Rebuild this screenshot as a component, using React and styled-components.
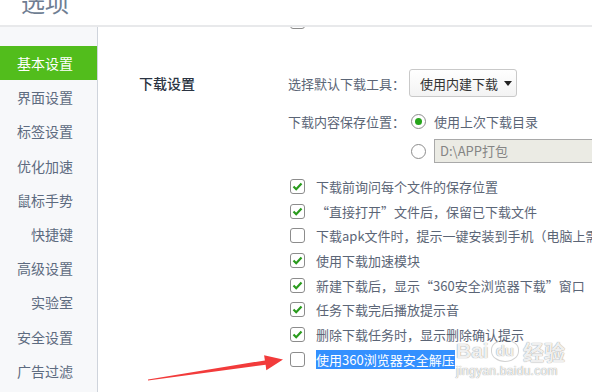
import React from "react";
import styled, { createGlobalStyle } from "styled-components";

const Global = createGlobalStyle`
  html, body { margin: 0; padding: 0; background: #fff; }
  body {
    width: 592px; height: 392px; overflow: hidden;
    font-family: "Noto Sans CJK SC", "Noto Sans", sans-serif;
  }
`;

const Page = styled.div`
  position: relative;
  width: 592px;
  height: 392px;
  display: flex;
  flex-direction: column;
  overflow: hidden;
`;

const Header = styled.header`
  height: 25px;
  flex: none;
  border-bottom: 2px solid #e8e9eb;
  overflow: hidden;
  padding-left: 21px;
`;

const Title = styled.h1`
  margin: -10px 0 0;
  font-size: 24px;
  line-height: 24px;
  font-weight: 400;
  color: #6f7e93;
`;

const Body = styled.div`
  flex: 1;
  display: flex;
  min-height: 0;
`;

const Sidebar = styled.nav`
  width: 98px;
  flex: none;
  background: #f7f8fa;
  border-right: 1px solid #cfd4dc;
  padding-top: 19px;
  box-sizing: border-box;
`;

const NavItem = styled.div`
  height: 34.2px;
  line-height: 34.2px;
  text-align: right;
  padding-right: 24px;
  font-size: 14px;
  color: ${p => (p.$active ? "#fff" : "#5d6b80")};
  background: ${p => (p.$active ? "#52bd1c" : "transparent")};
`;

const Main = styled.main`
  flex: 1;
  overflow: hidden;
  position: relative;
`;

const Scroll = styled.div`
  margin-top: -13px;
  padding-left: 41px;
`;

const PrevRow = styled.div`
  display: flex;
  padding-left: 149px;
  height: 15px;
`;

const Section = styled.section`
  display: grid;
  grid-template-columns: 149px 1fr;
  margin-top: 40px;
`;

const SectionTitle = styled.h2`
  margin: 0;
  font-size: 14px;
  line-height: 28px;
  font-weight: 500;
  color: #2b3442;
`;

const Content = styled.div`
  display: flex;
  flex-direction: column;
`;

const Line = styled.div`
  display: flex;
  align-items: center;
  height: ${p => p.$h || 24.7}px;
  margin-top: ${p => p.$mt || 0}px;
  font-size: 13px;
  color: #5b6576;
  white-space: nowrap;
`;

const Label = styled.span`
  width: 121px;
  flex: none;
`;

const Select = styled.div`
  box-sizing: border-box;
  width: 108px;
  height: 28px;
  border: 1px solid #c9c9c9;
  border-radius: 3px;
  background: linear-gradient(#ffffff, #f3f3f3);
  display: flex;
  align-items: center;
  padding-left: 10px;
  gap: 6px;
  color: #333;
  font-size: 13px;
`;

const Caret = styled.span`
  width: 0;
  height: 0;
  border-left: 4px solid transparent;
  border-right: 4px solid transparent;
  border-top: 5px solid #222;
`;

const Radio = styled.span`
  box-sizing: border-box;
  width: 15px;
  height: 15px;
  border-radius: 50%;
  border: 1px solid #8d8d8d;
  background: #fff;
  display: inline-flex;
  align-items: center;
  justify-content: center;
  margin-left: 2px;
  margin-right: 8px;
  flex: none;
  &::after {
    content: "";
    width: 7px;
    height: 7px;
    border-radius: 50%;
    background: ${p => (p.$on ? "#26a51a" : "transparent")};
  }
`;

const PathBox = styled.div`
  box-sizing: border-box;
  width: 180px;
  height: 24px;
  border: 1px solid #a9a9a9;
  background: #ebebe4;
  color: #858585;
  font-family: "Noto Sans CJK SC", "Liberation Sans", sans-serif;
  font-size: 13px;
  line-height: 22px;
  padding-left: 5px;
`;

const Box = styled.span`
  box-sizing: border-box;
  width: 15px;
  height: 15px;
  border: 1px solid #8c8c8c;
  border-radius: 3px;
  background: #fff;
  display: inline-flex;
  align-items: center;
  justify-content: center;
  margin-left: 2px;
  margin-right: 11px;
  flex: none;
`;

const Selected = styled.span`
  background: #3390ff;
  color: #fff;
  line-height: 19px;
  display: inline-block;
`;

const Arrow = styled.svg`
  position: absolute;
  left: 0;
  top: 0;
  pointer-events: none;
`;

const Watermark = styled.div`
  position: absolute;
  left: 456px;
  top: 340px;
  color: rgba(255, 255, 255, 0.9);
  text-shadow: 0 0 1px rgba(0, 0, 0, 0.35), 0 0 1px rgba(0, 0, 0, 0.25);
  font-family: "Liberation Sans", "Noto Sans CJK SC", sans-serif;
  pointer-events: none;
`;

const Brand = styled.div`
  display: flex;
  align-items: center;
  gap: 2px;
  font-size: 21px;
  font-weight: 700;
  line-height: 22px;
`;

const Paw = styled.span`
  display: inline-block;
  padding: 1px 4px;
  border-radius: 45% 45% 50% 50%;
  border: 1px solid rgba(0, 0, 0, 0.18);
  font-size: 15px;
  line-height: 18px;
`;

const BrandCn = styled.span`
  font-family: "Noto Sans CJK SC", sans-serif;
  margin-left: 2px;
`;

const Domain = styled.div`
  font-size: 12px;
  line-height: 12px;
  margin-top: 3px;
  letter-spacing: 0.3px;
`;

const Check = () => (
  <svg width="11" height="9" viewBox="0 0 11 9">
    <path d="M1.5 4.5 L4.2 7.2 L9.5 1.5" fill="none" stroke="#2a9b1d" strokeWidth="2.2" />
  </svg>
);

const CheckRow = ({ on, children }) => (
  <Line>
    <Box>{on && <Check />}</Box>
    {children}
  </Line>
);

const nav = ["基本设置", "界面设置", "标签设置", "优化加速", "鼠标手势", "快捷键", "高级设置", "实验室", "安全设置", "广告过滤"];

const checks = [
  [true, "下载前询问每个文件的保存位置"],
  [true, "“直接打开”文件后，保留已下载文件"],
  [false, "下载apk文件时，提示一键安装到手机（电脑上需"],
  [true, "使用下载加速模块"],
  [true, "新建下载后，显示“360安全浏览器下载”窗口"],
  [true, "任务下载完后播放提示音"],
  [true, "删除下载任务时，显示删除确认提示"],
];

export default function App() {
  return (
    <Page>
      <Global />
      <Header>
        <Title>选项</Title>
      </Header>
      <Body>
        <Sidebar>
          {nav.map((n, i) => (
            <NavItem key={n} $active={i === 0}>{n}</NavItem>
          ))}
        </Sidebar>
        <Main>
          <Scroll>
            <PrevRow>
              <Box />
            </PrevRow>
            <Section>
              <SectionTitle>下载设置</SectionTitle>
              <Content>
                <Line $h={28}>
                  <Label>选择默认下载工具：</Label>
                  <Select>使用内建下载<Caret /></Select>
                </Line>
                <Line $h={20} $mt={14}>
                  <Label>下载内容保存位置：</Label>
                  <Radio $on />使用上次下载目录
                </Line>
                <Line $h={24} $mt={8}>
                  <Label />
                  <Radio />
                  <PathBox>D:\APP打包</PathBox>
                </Line>
                <Line $h={11} />
                {checks.map(([on, t]) => (
                  <CheckRow key={t} on={on}>{t}</CheckRow>
                ))}
                <CheckRow on={false}>
                  <Selected>使用360浏览器安全解压</Selected>
                </CheckRow>
              </Content>
            </Section>
          </Scroll>
        </Main>
      </Body>
      <Arrow width="592" height="392">
        <polygon
          points="148,379.5 264.9,360.4 264.1,355.2 283,359.6 266.3,370.2 265.6,364.8 148,380.6"
          fill="#f23b3b"
        />
      </Arrow>
      <Watermark>
        <Brand>
          Bai<Paw>du</Paw>
          <BrandCn>经验</BrandCn>
        </Brand>
        <Domain>jingyan.baidu.com</Domain>
      </Watermark>
    </Page>
  );
}
